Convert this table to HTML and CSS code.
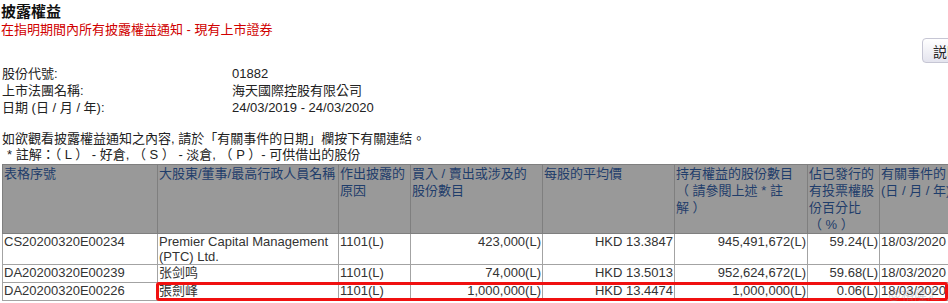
FILE: index.html
```html
<!DOCTYPE html>
<html lang="zh-Hant">
<head>
    <meta charset="UTF-8">
    <meta name="viewport" content="width=device-width, initial-scale=1.0">
    <link rel="stylesheet" href="styles.css">
</head>
<body>
    <div class="page">
        <!-- 標題 -->
        <div class="title">披露權益</div>
        <div class="subtitle">在指明期間內所有披露權益通知 - 現有上市證券</div>

        <div class="tools">
            <button class="help-button">説明</button>
        </div>

        <!-- 股份資料 -->
        <div class="info">
            <span>股份代號:</span><span>01882</span>
            <span>上市法團名稱:</span><span>海天國際控股有限公司</span>
            <span>日期 (日 / 月 / 年):</span><span>24/03/2019 - 24/03/2020</span>
        </div>

        <div class="notes">
            <div>如欲觀看披露權益通知之內容, 請於「有關事件的日期」欄按下有關連結。</div>
            <div class="note-line">* 註解：（ L ） - 好倉, （ S ） - 淡倉, （ P ）- 可供借出的股份</div>
        </div>

        <!-- 披露權益表 -->
        <div class="table-wrap">
            <table class="notice-table">
                <colgroup>
                    <col style="width:155px">
                    <col style="width:181px">
                    <col style="width:72px">
                    <col style="width:132px">
                    <col style="width:132px">
                    <col style="width:133px">
                    <col style="width:72px">
                    <col style="width:95px">
                </colgroup>
                <thead>
                    <tr>
                        <th>表格序號</th>
                        <th>大股東/董事/最高行政人員名稱</th>
                        <th>作出披露的<br>原因</th>
                        <th>買入 / 賣出或涉及的<br>股份數目</th>
                        <th>每股的平均價</th>
                        <th>持有權益的股份數目<br>（ 請參閱上述 * 註<br>解 ）</th>
                        <th>佔已發行的<br>有投票權股<br>份百分比<br>（ % ）</th>
                        <th>有關事件的日期<br>(日 / 月 / 年)</th>
                    </tr>
                </thead>
                <tbody>
                    <tr>
                        <td>CS20200320E00234</td>
                        <td>Premier Capital Management (PTC) Ltd.</td>
                        <td>1101(L)</td>
                        <td class="num">423,000(L)</td>
                        <td class="num">HKD 13.3847</td>
                        <td class="num">945,491,672(L)</td>
                        <td class="num">59.24(L)</td>
                        <td>18/03/2020</td>
                    </tr>
                    <tr>
                        <td>DA20200320E00239</td>
                        <td>张剑鸣</td>
                        <td>1101(L)</td>
                        <td class="num">74,000(L)</td>
                        <td class="num">HKD 13.5013</td>
                        <td class="num">952,624,672(L)</td>
                        <td class="num">59.68(L)</td>
                        <td>18/03/2020</td>
                    </tr>
                    <tr>
                        <td>DA20200320E00226</td>
                        <td>張劍峰</td>
                        <td>1101(L)</td>
                        <td class="num">1,000,000(L)</td>
                        <td class="num">HKD 13.4474</td>
                        <td class="num">1,000,000(L)</td>
                        <td class="num">0.06(L)</td>
                        <td>18/03/2020</td>
                    </tr>
                </tbody>
            </table>

            <!-- 標示框 -->
            <div class="highlight"></div>
            <div class="watermark">@格隆汇</div>
        </div>
    </div>
</body>
</html>
```

FILE: styles.css
```css
/* 共通 */
body {
    margin: 0;
    padding: 0;
    background-color: #ffffff;
    font-family: "Liberation Sans", "Noto Sans CJK TC", sans-serif;
    font-size: 13px;
    color: #222;
    overflow: hidden;
}

.page {
    width: 980px;
    padding: 2px 0 0 1px;
}

/* 標題 */
.title {
    font-size: 15px;
    font-weight: bold;
    line-height: 19px;
    color: #111;
}

.subtitle {
    color: #d00000;
    line-height: 17px;
}

.tools {
    display: flex;
    justify-content: flex-start;
    padding-left: 921px;
    height: 27px;
}

.help-button {
    height: 25px;
    padding: 0 10px;
    font-family: "Liberation Sans", "Noto Sans CJK TC", sans-serif;
    font-size: 14px;
    color: #222;
    background: linear-gradient(#ffffff, #e4e4ee);
    border: 1px solid #c6c6d4;
    border-radius: 4px;
    white-space: nowrap;
}

/* 股份資料 */
.info {
    display: grid;
    grid-template-columns: 230px auto;
    line-height: 17px;
    padding-left: 1px;
    color: #222;
}

.notes {
    margin-top: 15px;
    line-height: 16px;
    padding-left: 1px;
}

.note-line {
    padding-left: 5px;
}

/* 表格 */
.table-wrap {
    position: relative;
    margin-top: 1px;
}

.notice-table {
    table-layout: fixed;
    border-collapse: collapse;
    margin-left: 1px;
}

.notice-table th {
    background-color: #999999;
    color: #1f3d6b;
    font-weight: normal;
    text-align: left;
    vertical-align: top;
    line-height: 17px;
    height: 68px;
    padding: 0 1px;
    border: 1px solid #7f7f7f;
    white-space: nowrap;
    overflow: hidden;
}

.notice-table td {
    color: #333;
    line-height: 15px;
    height: 17px;
    padding: 0 1px;
    vertical-align: top;
    border: 1px solid #a3a3a3;
}

.notice-table td.num {
    text-align: right;
}

/* 紅色標示框 */
.highlight {
    position: absolute;
    left: 155px;
    top: 118px;
    width: 792px;
    height: 19px;
    box-sizing: border-box;
    border: 3px solid #f01010;
    border-radius: 3px;
}

.watermark {
    position: absolute;
    left: 887px;
    top: 120px;
    font-size: 13px;
    color: rgba(140, 140, 140, 0.4);
}
```
